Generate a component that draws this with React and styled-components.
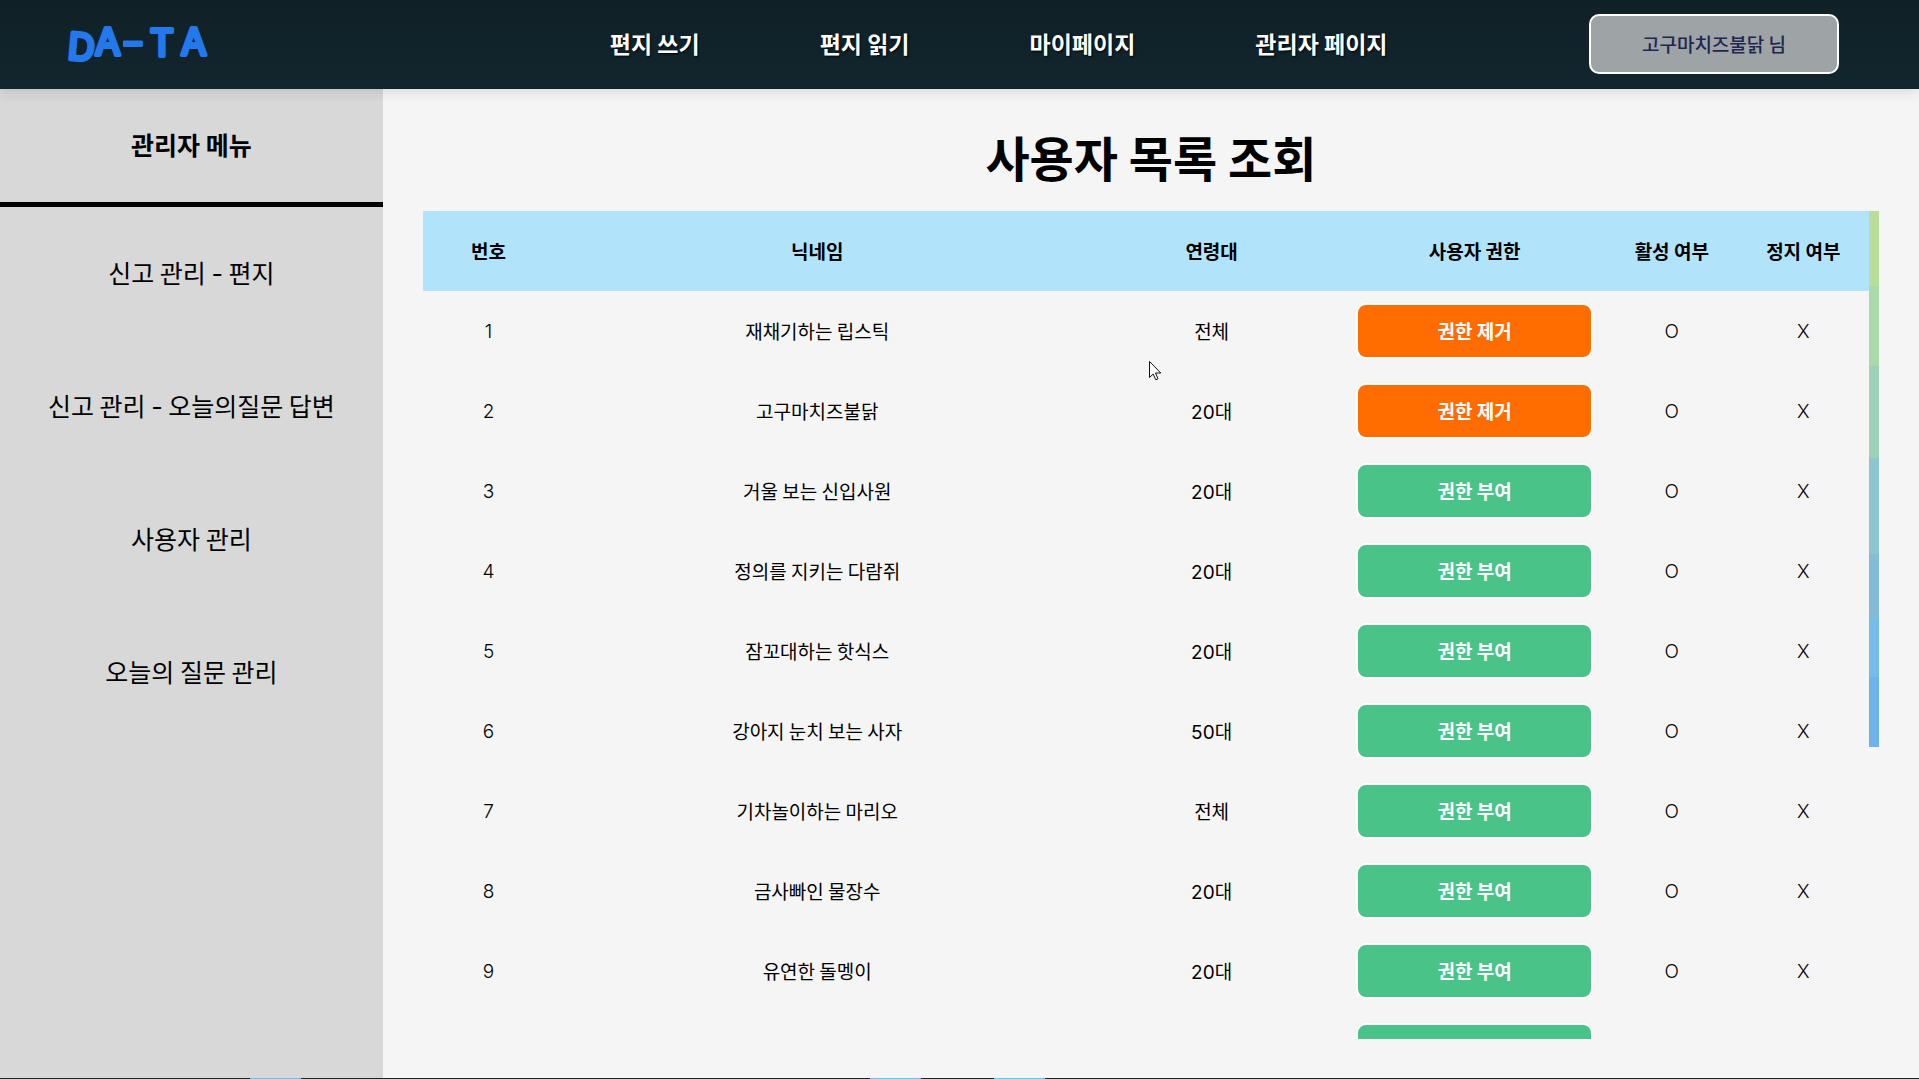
import React from "react";
import styled, { createGlobalStyle } from "styled-components";

const GlobalStyle = createGlobalStyle`
  *, *::before, *::after { box-sizing: border-box; }
  body {
    margin: 0;
    background: #f5f5f5;
    color: #000;
    font-family: "Noto Sans CJK KR", "Noto Sans", sans-serif;
  }
  button { font-family: inherit; cursor: pointer; }
  a { color: inherit; text-decoration: none; }
`;

const Page = styled.div`
  display: grid;
  grid-template-rows: auto minmax(0, 1fr) auto;
  height: 100vh;
  overflow: hidden;
`;

const Header = styled.header`
  position: relative;
  z-index: 1;
  display: grid;
  grid-template-columns: minmax(0, 6fr) auto minmax(0, 5fr);
  align-items: center;
  height: 89px;
  padding: 0 80px 2px 68px;
  background: linear-gradient(#102027, #12262d);
  box-shadow: 0 2px 12px rgba(31, 38, 80, 0.14);
`;

const Logo = styled.a`
  display: flex;
  justify-self: start;
`;

const LogoMark = styled.svg`
  overflow: visible;
  fill: #2378eb;
  stroke: #2378eb;
  stroke-width: 4px;
  stroke-linejoin: round;
  font-family: Inter, sans-serif;
  font-size: 37px;
  font-weight: 400;
`;

const LogoDash = styled.tspan`
  font-size: 56px;
  stroke-width: 2px;
`;

const Nav = styled.nav`
  display: flex;
  gap: 120px;
`;

const NavLink = styled.a`
  padding-bottom: 2px;
  color: #fff;
  font-size: 23px;
  font-weight: 700;
  line-height: 32px;
  text-shadow: 1px 1px 2px #000;
`;

const UserButton = styled.button`
  justify-self: end;
  width: 250px;
  height: 60px;
  border: 2px solid #fff;
  border-radius: 10px;
  background: #9ea3a5;
  color: #1f2650;
  font-size: 19px;
  font-weight: 500;
`;

const Body = styled.div`
  display: grid;
  grid-template-columns: calc(20% - 1px) minmax(0, 1fr);
  min-height: 0;
`;

const Sidebar = styled.aside`
  background: #d8d8d8;
  text-align: center;
  font-size: 25px;
`;

const SidebarTitle = styled.h2`
  display: flex;
  align-items: center;
  justify-content: center;
  height: 118px;
  margin: 0;
  padding-bottom: 4px;
  border-bottom: 5px solid #000;
  font-size: inherit;
  font-weight: 700;
`;

const SidebarLink = styled.a`
  display: block;
  height: 133px;
  line-height: 131px;
`;

const Dash = styled.span`
  font-family: Inter, sans-serif;
`;

const Main = styled.main`
  display: flex;
  flex-direction: column;
  min-height: 0;
  padding: 36px 40px 39px;
`;

const Title = styled.h1`
  margin: 0 0 24px;
  font-size: 48px;
  font-weight: 700;
  line-height: 62px;
  text-align: center;
`;

const ListArea = styled.div`
  display: grid;
  grid-template-columns: minmax(0, 1fr) 10px;
  flex: 1;
  min-height: 0;
`;

const ListViewport = styled.div`
  overflow: hidden;
`;

const ScrollThumb = styled.div`
  height: ${(p) => p.$ratio}%;
  background: linear-gradient(
    #b9dd9b 0 14%,
    #a8daaa 14% 29%,
    #9bd2b8 29% 46%,
    #8dc6cf 46% 64%,
    #84bcd8 64% 76%,
    #77bce8 76% 87%,
    #6db3ec 87%
  );
`;

const Table = styled.table`
  width: 100%;
  border-collapse: collapse;
  table-layout: fixed;
  font-size: 19px;
  text-align: center;
`;

const Col = styled.col`
  width: calc(100% * ${(p) => p.$span} / 11);
`;

const HeadCell = styled.th`
  height: 80px;
  padding: 0 0 2px;
  background: #b1e4fb;
  font-weight: 700;
`;

const Cell = styled.td`
  height: 80px;
  padding: 0 0 2px;
`;

const AgeCell = styled(Cell)`
  font-family: Inter, "Noto Sans CJK KR", sans-serif;
`;

const MarkCell = styled(AgeCell)`
  padding: 0;
  font-weight: 300;
`;

const ActionCell = styled(Cell)`
  padding: 0;
`;

const RoleButton = styled.button`
  display: block;
  width: 90%;
  height: 56px;
  margin: 0 auto;
  padding: 0 0 2px;
  border: 2px solid #fff;
  border-radius: 10px;
  background: ${(p) => (p.$admin ? "#ff6d00" : "#49c388")};
  color: #fff;
  font-size: 19px;
  font-weight: 700;
`;

const BottomEdge = styled.div`
  height: 1px;
  background: linear-gradient(
    90deg,
    #222 250px, #7db8de 250px 301px,
    #222 301px 870px, #6cc4ee 870px 921px,
    #222 921px 994px, #6cc4ee 994px 1045px,
    #222 1045px
  );
`;

const Pointer = styled.svg`
  position: absolute;
  z-index: 2;
  left: 1149px;
  top: 361px;
  pointer-events: none;
`;

const navItems = ["편지 쓰기", "편지 읽기", "마이페이지", "관리자 페이지"];
const menuItems = [
  ["신고 관리", "편지"],
  ["신고 관리", "오늘의질문 답변"],
  ["사용자 관리"],
  ["오늘의 질문 관리"],
];
const columns = [
  ["번호", 1],
  ["닉네임", 4],
  ["연령대", 2],
  ["사용자 권한", 2],
  ["활성 여부", 1],
  ["정지 여부", 1],
];
const users = [
  ["재채기하는 립스틱", "전체", true],
  ["고구마치즈불닭", "20대", true],
  ["거울 보는 신입사원", "20대", false],
  ["정의를 지키는 다람쥐", "20대", false],
  ["잠꼬대하는 핫식스", "20대", false],
  ["강아지 눈치 보는 사자", "50대", false],
  ["기차놀이하는 마리오", "전체", false],
  ["금사빠인 물장수", "20대", false],
  ["유연한 돌멩이", "20대", false],
];

function UserRow({ number, name, age, admin }) {
  return (
    <tr>
      <MarkCell>{number}</MarkCell>
      <Cell>{name}</Cell>
      <AgeCell>{age}</AgeCell>
      <ActionCell>
        <RoleButton type="button" $admin={admin}>
          {admin ? "권한 제거" : "권한 부여"}
        </RoleButton>
      </ActionCell>
      <MarkCell>O</MarkCell>
      <MarkCell>X</MarkCell>
    </tr>
  );
}

export default function App() {
  return (
    <>
      <GlobalStyle />
      <Page>
        <Header>
          <Logo href="#home" aria-label="DA-TA">
            <LogoMark width="144" height="44" viewBox="0 0 144 44">
              <text x="-1 27" y="37 33" rotate="5 0">
                DA<LogoDash x="52" y="39">-</LogoDash>
                <tspan x="82 113" y="34 33">TA</tspan>
              </text>
            </LogoMark>
          </Logo>
          <Nav>
            {navItems.map((item) => (
              <NavLink key={item} href="#nav">{item}</NavLink>
            ))}
          </Nav>
          <UserButton type="button">고구마치즈불닭 님</UserButton>
        </Header>
        <Body>
          <Sidebar>
            <SidebarTitle>관리자 메뉴</SidebarTitle>
            {menuItems.map(([group, detail]) => (
              <SidebarLink key={group + detail} href="#menu">
                {group}
                {detail && <> <Dash>-</Dash> {detail}</>}
              </SidebarLink>
            ))}
          </Sidebar>
          <Main>
            <Title>사용자 목록 조회</Title>
            <ListArea>
              <ListViewport>
                <Table>
                  <colgroup>
                    {columns.map(([label, span]) => (
                      <Col key={label} $span={span} />
                    ))}
                  </colgroup>
                  <thead>
                    <tr>
                      {columns.map(([label]) => (
                        <HeadCell key={label} scope="col">{label}</HeadCell>
                      ))}
                    </tr>
                  </thead>
                  <tbody>
                    {users.map(([name, age, admin], i) => (
                      <UserRow key={name} number={i + 1} name={name} age={age} admin={admin} />
                    ))}
                    <tr>
                      <Cell colSpan={3} />
                      <ActionCell>
                        <RoleButton type="button" aria-label="권한 부여" />
                      </ActionCell>
                      <Cell colSpan={2} />
                    </tr>
                  </tbody>
                </Table>
              </ListViewport>
              <ScrollThumb $ratio={64.7} />
            </ListArea>
          </Main>
        </Body>
        <BottomEdge />
      </Page>
      <Pointer width="13" height="20" viewBox="0 0 13 20" aria-hidden="true">
        <path
          d="M.5.5V16.5L4.2 13L6.8 18.8L9 17.8L6.5 12H11.8Z"
          fill="#fff"
          stroke="#111"
        />
      </Pointer>
    </>
  );
}
